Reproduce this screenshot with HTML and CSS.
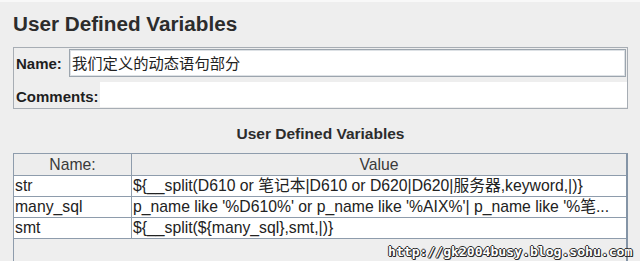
FILE: index.html
```html
<!DOCTYPE html>
<html lang="zh">
<head>
    <meta charset="UTF-8">
    <title>User Defined Variables</title>
    <link rel="stylesheet" href="styles.css">
</head>
<body>
    <div class="window">
        <h1 class="title">User Defined Variables</h1>

        <!-- name / comments box -->
        <div class="panel">
            <div class="row name-row">
                <span class="lbl name-lbl">Name:</span>
                <div class="field">我们定义的动态语句部分</div>
            </div>
            <div class="row comments-row">
                <span class="lbl comments-lbl">Comments:</span>
                <div class="comments"></div>
            </div>
        </div>

        <div class="table-title">User Defined Variables</div>

        <!-- variables table -->
        <div class="table-pane">
            <table class="vars">
                <tr>
                    <th class="col-name">Name:</th>
                    <th>Value</th>
                </tr>
                <tr>
                    <td>str</td>
                    <td>${__split(D610 or 笔记本|D610 or D620|D620|服务器,keyword,|)}</td>
                </tr>
                <tr>
                    <td>many_sql</td>
                    <td>p_name like '%D610%' or p_name like '%AIX%'| p_name like '%笔...</td>
                </tr>
                <tr>
                    <td>smt</td>
                    <td>${__split(${many_sql},smt,|)}</td>
                </tr>
            </table>
        </div>
    </div>

    <div class="watermark">http://gk2004busy.blog.sohu.com</div>
</body>
</html>
```

FILE: styles.css
```css
body {
    margin: 0;
    width: 640px;
    height: 261px;
    overflow: hidden;
    background-color: #eeeeee;
    font-family: 'Liberation Sans', 'Noto Sans CJK SC', sans-serif;
    color: #222;
    position: relative;
}
.window {
    height: 259px;
    border-top: 2px solid #f8f8f8;
    padding: 0 12px 0 13px;
    display: flex;
    flex-direction: column;
}
.title {
    margin: 0;
    padding-top: 10px;
    font-size: 20.7px;
    line-height: 24px;
    font-weight: bold;
    color: #2c2c2c;
}
.panel {
    margin-top: 11px;
    border: 1px solid #a7adb4;
    padding: 1px 0 0 1px;
    height: 59px;
}
.row {
    display: flex;
    align-items: center;
}
.lbl {
    font-size: 15px;
    font-weight: bold;
    color: #1e1e1e;
    padding-left: 1px;
    box-sizing: border-box;
}
.name-row {
    height: 28px;
    margin-right: 1px;
}
.name-lbl {
    width: 54px;
}
.field {
    flex: 1;
    height: 28px;
    box-sizing: border-box;
    background-color: #fff;
    border: 1px solid #9ca5ae;
    box-shadow: inset 0 0 0 1px #dde1e5;
    font-size: 15.3px;
    line-height: 26px;
    padding: 1px 0 0 2px;
    color: #222;
}
.comments-row {
    height: 25px;
    margin-top: 5px;
}
.comments-lbl {
    width: 85px;
    padding-top: 3px;
}
.comments {
    flex: 1;
    height: 25px;
    background-color: #fff;
}
.table-title {
    margin-top: 15px;
    text-align: center;
    font-size: 15.5px;
    line-height: 20px;
    font-weight: bold;
    color: #2c2c2c;
}
.table-pane {
    margin-top: 9px;
    flex: 1;
    border: 1px solid #8e9cac;
    border-right: 2px solid #8494a6;
    border-bottom: none;
}
.vars {
    width: 100%;
    border-collapse: collapse;
    font-size: 15.75px;
}
.vars th {
    height: 21px;
    padding: 0;
    font-weight: normal;
    color: #3a3a3a;
    background-color: #ededed;
    border-bottom: 1px solid #8e9cac;
}
.vars th.col-name {
    width: 117px;
    border-right: 1px solid #8e9cac;
}
.vars td {
    height: 20px;
    padding: 0 0 0 1px;
    background-color: #fff;
    white-space: nowrap;
    border-bottom: 1px solid #8e9cac;
    border-right: 1px solid #8e9cac;
    line-height: 20px;
}
.vars td:last-child {
    border-right: none;
    padding-left: 1px;
}
.watermark {
    position: absolute;
    left: 388px;
    top: 244px;
    font-family: 'DejaVu Sans Mono', monospace;
    font-size: 13.1px;
    font-weight: bold;
    color: #fff;
    text-shadow: 1px 0 0 #2a2a2a, -1px 0 0 #2a2a2a, 0 1px 0 #2a2a2a, 0 -1px 0 #2a2a2a, 1px 1px 0 #2a2a2a;
}
```
